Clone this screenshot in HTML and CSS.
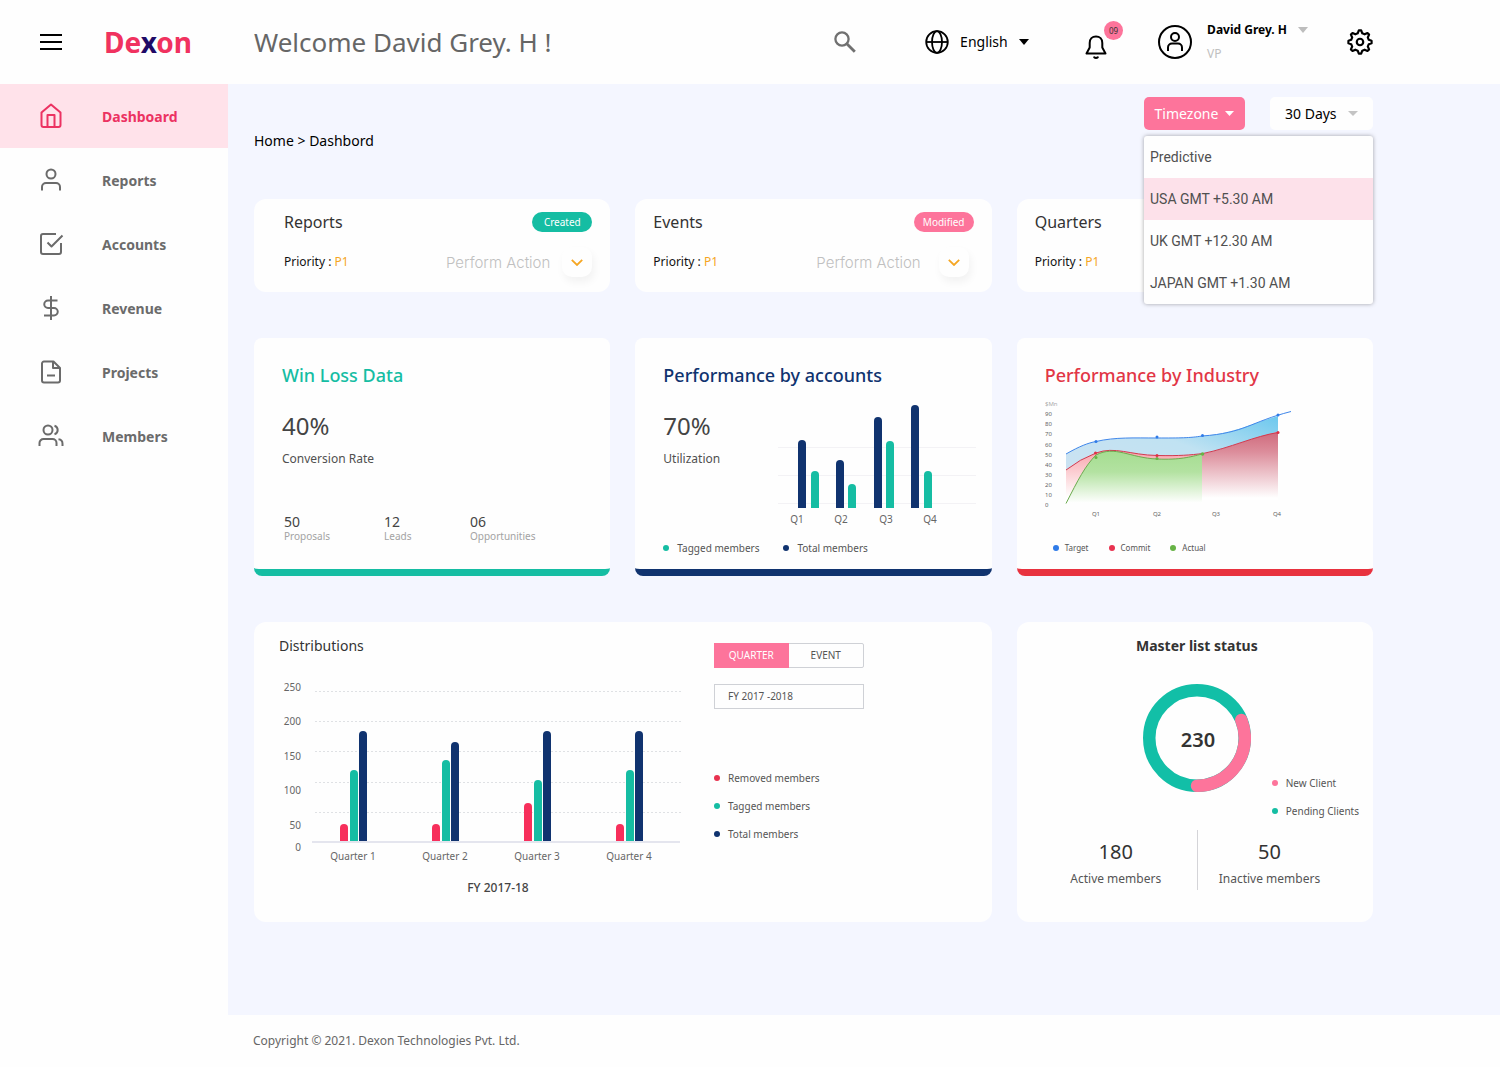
FILE: index.html
```html
<!DOCTYPE html>
<html lang="en">
<head>
<meta charset="utf-8">
<meta name="viewport" content="width=device-width, initial-scale=1">
<title>Dexon Dashboard</title>
<link rel="stylesheet" href="styles.css">
</head>
<body>
<header class="topbar">
  <div class="brand">
    <button class="icon-btn" type="button" aria-label="Menu"><svg width="22" height="18" viewBox="0 0 22 18" fill="none" stroke="#000" stroke-width="2"><path d="M0 2h22M0 9h22M0 16h22"/></svg></button>
    <a class="logo" href="#">De<span class="logo-x">x</span>on</a>
  </div>
  <h1 class="welcome">Welcome David Grey. H !</h1>
  <div class="tools">
    <button class="icon-btn search" type="button" aria-label="Search"><svg width="22" height="22" viewBox="0 0 22 22" fill="none" stroke="#707070" stroke-width="2.3"><circle cx="8" cy="8" r="6.6"/><path d="M12.8 12.8l8 8" stroke-width="2.8"/></svg></button>
    <label class="language">
      <svg width="24" height="24" viewBox="0 0 24 24" fill="none" stroke="#000" stroke-width="1.8"><circle cx="12" cy="12" r="10.8"/><ellipse cx="12" cy="12" rx="5" ry="10.8"/><path d="M1.2 12h21.6"/></svg>
      <select class="plain-select" aria-label="Language"><option>English</option></select>
      <svg width="10" height="6" viewBox="0 0 10 6"><path d="M0 0h10L5 6z"/></svg>
    </label>
    <button class="icon-btn bell" type="button" aria-label="Notifications"><svg width="22" height="24" viewBox="0 0 22 24" fill="none" stroke="#000" stroke-width="2" stroke-linejoin="round" stroke-linecap="round"><path d="M11 1.500c-3.800 0-6.300 2.700-6.300 6.400v4.600L1.500 18.500h19l-3.200-6V7.900c0-3.700-2.500-6.400-6.300-6.400z"/><path d="M9.200 22.200c.9.900 2.700.9 3.600 0"/></svg><span class="count">09</span></button>
    <div class="profile">
      <svg width="34" height="34" viewBox="0 0 34 34" fill="none" stroke="#000" stroke-width="2"><circle cx="17" cy="17" r="16"/><circle cx="17" cy="12" r="4"/><path d="M10 26v-3.500a4 4 0 0 1 4-4h6a4 4 0 0 1 4 4V26"/></svg>
      <div><div class="profile-name">David Grey. H</div><div class="profile-role">VP</div></div>
      <svg class="profile-caret" width="10" height="6" viewBox="0 0 10 6" fill="#bdbdbd"><path d="M0 0h10L5 6z"/></svg>
    </div>
    <button class="icon-btn" type="button" aria-label="Settings"><svg width="26" height="26" viewBox="0 0 24 24" fill="none" stroke="#000" stroke-width="2" stroke-linejoin="round"><circle cx="12" cy="12" r="3"/><path d="M9.900 4l1-2.700h2.200l1 2.700 2.200.9 2.600-1.200 1.500 1.500-1.200 2.600.9 2.200 2.600.9v2.200l-2.600.9-.9 2.200 1.200 2.600-1.500 1.500-2.600-1.200-2.200.9-1 2.700h-2.200l-1-2.700-2.200-.9-2.600 1.200-1.500-1.500 1.200-2.600-.9-2.200-2.600-.9v-2.200l2.600-.9.9-2.200-1.200-2.600 1.500-1.500 2.600 1.200z"/></svg></button>
  </div>
</header>
<div class="shell">
  <nav class="sidebar">
    <a class="nav-item active" href="#"><svg width="26" height="26" viewBox="0 0 26 26"><path d="M3.500 9.500L13 1.500l9.500 8V22a2 2 0 0 1-2 2h-15a2 2 0 0 1-2-2z"/><path d="M9.500 24V12h7v12"/></svg>Dashboard</a>
    <a class="nav-item" href="#"><svg width="26" height="26" viewBox="0 0 26 26"><circle cx="13" cy="7" r="4.500"/><path d="M4 23.500V20a4 4 0 0 1 4-4h10a4 4 0 0 1 4 4v3.500"/></svg>Reports</a>
    <a class="nav-item" href="#"><svg width="26" height="26" viewBox="0 0 26 26"><path d="M18 3H5a2 2 0 0 0-2 2v16a2 2 0 0 0 2 2h16a2 2 0 0 0 2-2v-9"/><path d="M9.500 11.500l4 4L24.500 4.500"/></svg>Accounts</a>
    <a class="nav-item" href="#"><svg width="26" height="26" viewBox="0 0 26 26"><path d="M13 1v24M19.500 5.500H10a3.750 3.750 0 0 0 0 7.500h6a3.750 3.750 0 0 1 0 7.500H6"/></svg>Revenue</a>
    <a class="nav-item" href="#"><svg width="26" height="26" viewBox="0 0 26 26"><path d="M15.500 2.500H6a2 2 0 0 0-2 2v17a2 2 0 0 0 2 2h14a2 2 0 0 0 2-2V9z"/><path d="M15 2.500V9h7M9 16.500h8"/></svg>Projects</a>
    <a class="nav-item" href="#"><svg width="26" height="26" viewBox="0 0 26 26"><circle cx="10" cy="7" r="4.500"/><path d="M1.500 23v-3a4 4 0 0 1 4-4h9a4 4 0 0 1 4 4v3M16.500 2.700a4.500 4.500 0 0 1 0 8.600M20.500 16.200a4.500 4.500 0 0 1 4 4.500V23"/></svg>Members</a>
  </nav>
  <div class="content">
    <main class="main">
      <div class="page-head">
        <div class="crumbs"><a href="#">Home</a> &gt; Dashbord</div>
        <div class="filters">
          <button class="timezone" type="button" aria-expanded="true">Timezone <svg width="9" height="5" viewBox="0 0 9 5" fill="#fff"><path d="M0 0h9L4.500 5z"/></svg></button>
          <label class="days"><select class="plain-select" aria-label="Period"><option>30 Days</option></select><svg width="10" height="5" viewBox="0 0 10 5" fill="#c4c4c4"><path d="M0 0h10L5 5z"/></svg></label>
          <ul class="menu">
            <li><button type="button">Predictive</button></li>
            <li><button class="chosen" type="button">USA GMT +5.30 AM</button></li>
            <li><button type="button">UK GMT +12.30 AM</button></li>
            <li><button type="button">JAPAN GMT +1.30 AM</button></li>
          </ul>
        </div>
      </div>

      <div class="grid">
        <section class="card summary wide-start">
          <div class="summary-row"><h2>Reports</h2><span class="tag created">Created</span></div>
          <div class="summary-row"><p class="priority">Priority : <span>P1</span></p><div class="action">Perform Action<button type="button" aria-label="Report actions"><svg width="12" height="7" viewBox="0 0 12 7" fill="none" stroke="#f5a623" stroke-width="1.800"><path d="M.8.800L6 6 11.200.800"/></svg></button></div></div>
        </section>
        <section class="card summary">
          <div class="summary-row"><h2>Events</h2><span class="tag modified">Modified</span></div>
          <div class="summary-row"><p class="priority">Priority : <span>P1</span></p><div class="action roomy">Perform Action<button type="button" aria-label="Event actions"><svg width="12" height="7" viewBox="0 0 12 7" fill="none" stroke="#f5a623" stroke-width="1.800"><path d="M.8.800L6 6 11.200.800"/></svg></button></div></div>
        </section>
        <section class="card summary">
          <div class="summary-row"><h2>Quarters</h2></div>
          <div class="summary-row"><p class="priority">Priority : <span>P1</span></p></div>
        </section>

        <section class="card metric teal">
          <h2>Win Loss Data</h2>
          <div class="figure">40%</div>
          <div class="figure-label">Conversion Rate</div>
          <dl class="stats">
            <div><dd>50</dd><dt>Proposals</dt></div>
            <div><dd>12</dd><dt>Leads</dt></div>
            <div><dd>06</dd><dt>Opportunities</dt></div>
          </dl>
        </section>

        <section class="card metric navy">
          <h2>Performance by accounts</h2>
          <div class="metric-body">
            <div>
              <div class="figure">70%</div>
              <div class="figure-label">Utilization</div>
            </div>
            <svg class="chart" width="198" height="128" viewBox="778 400 198 128">
              <path d="M778 447.500h198M778 475.500h198M778 503.500h198" stroke="#f3f2f5"/>
              <g fill="#10336f">
                <path d="M798 508v-64a4 4 0 0 1 8 0v64z"/><path d="M836 508v-44a4 4 0 0 1 8 0v44z"/><path d="M874 508v-87a4 4 0 0 1 8 0v87z"/><path d="M911 508v-99a4 4 0 0 1 8 0v99z"/>
              </g>
              <g fill="#15bda3">
                <path d="M811 508v-33a4 4 0 0 1 8 0v33z"/><path d="M848 508v-20a4 4 0 0 1 8 0v20z"/><path d="M886 508v-63a4 4 0 0 1 8 0v63z"/><path d="M924 508v-33a4 4 0 0 1 8 0v33z"/>
              </g>
              <g class="axis mid"><text x="797" y="523">Q1</text><text x="841" y="523">Q2</text><text x="886" y="523">Q3</text><text x="930" y="523">Q4</text></g>
            </svg>
          </div>
          <ul class="legend row"><li class="teal-dot">Tagged members</li><li class="navy-dot">Total members</li></ul>
        </section>

        <section class="card metric red">
          <h2>Performance by Industry</h2>
          <svg class="chart" width="250" height="128" viewBox="1045 400 250 128">
            <defs>
              <linearGradient id="target" x1="0" x2="1" y1="1" y2="0"><stop offset="0" stop-color="#cfe2f2"/><stop offset=".6" stop-color="#c0e2f2"/><stop offset="1" stop-color="#6cc8ee"/></linearGradient>
              <linearGradient id="commit" x1="0" x2="0" y1="0" y2="1"><stop offset="0" stop-color="#cf6a7c"/><stop offset=".3" stop-color="#dc8d9b"/><stop offset="1" stop-color="#fff"/></linearGradient>
              <linearGradient id="early" x1="0" x2="0" y1="0" y2="1"><stop offset="0" stop-color="#f8a3ab"/><stop offset="1" stop-color="#fff"/></linearGradient>
              <linearGradient id="actual" x1="0" x2="0" y1="0" y2="1"><stop offset="0" stop-color="#a5dd91"/><stop offset=".4" stop-color="#b3e2a1"/><stop offset="1" stop-color="#fff"/></linearGradient>
            </defs>
            <path fill="url(#target)" d="M1066 454C1080 446 1088 443 1096 441.500C1115 437 1135 438 1157 438C1180 438 1190 438 1202 436C1235 433 1250 424 1278 416V497H1066z"/>
            <path fill="#fff" d="M1066 470Q1080 459 1096 453C1115 446 1130 455 1157 455.500C1180 456 1190 455 1203 453.500C1230 448 1255 436 1278 432V500H1066z"/>
            <path fill="url(#early)" d="M1066 470Q1080 459 1096 453C1115 446 1130 455 1157 455.500C1180 456 1190 455 1203 453.500V497H1066z"/>
            <path fill="url(#commit)" d="M1202 454C1230 448 1255 436 1278 432V498H1202z"/>
            <path fill="url(#actual)" d="M1066 503C1078 480 1085 466 1096 455C1115 445 1130 458 1157 459C1180 460 1190 457 1202 454V503z"/>
            <g fill="none" stroke-width="1">
              <path stroke="#3f86ea" d="M1066 454C1080 446 1088 443 1096 441.500C1115 437 1135 438 1157 438C1180 438 1190 438 1202 436C1245 433 1250 422 1291 411.500"/>
              <path stroke="#cf3a50" d="M1066 470Q1080 459 1096 453C1115 446 1130 455 1157 455.500C1180 456 1190 455 1203 453.500C1230 448 1255 436 1278 432.500"/>
              <path stroke="#6cab4f" d="M1066 503.500C1078 480 1085 466 1096 455C1115 445 1130 458 1157 459C1180 460 1190 457 1202 454"/>
            </g>
            <g fill="#2f7be8"><circle cx="1096" cy="441.500" r="1.500"/><circle cx="1157" cy="437" r="1.500"/><circle cx="1202.500" cy="435.500" r="1.500"/><circle cx="1278" cy="415" r="1.500"/></g>
            <g fill="#dd3045"><circle cx="1095.500" cy="453" r="1.500"/><circle cx="1157" cy="455.500" r="1.500"/><circle cx="1278" cy="432.500" r="1.500"/></g>
            <g fill="#67b346"><circle cx="1096" cy="457.500" r="1.500"/><circle cx="1157" cy="458.500" r="1.500"/><circle cx="1202.500" cy="454" r="1.800"/></g>
            <g class="axis tiny"><text class="unit" x="1045" y="406">$Mn</text><text x="1045" y="416">90</text><text x="1045" y="426">80</text><text x="1045" y="436">70</text><text x="1045" y="447">60</text><text x="1045" y="457">50</text><text x="1045" y="467">40</text><text x="1045" y="477">30</text><text x="1045" y="487">20</text><text x="1045" y="497">10</text><text x="1045" y="507">0</text></g>
            <g class="axis tiny mid"><text x="1096" y="516">Q1</text><text x="1157" y="516">Q2</text><text x="1216" y="516">Q3</text><text x="1277" y="516">Q4</text></g>
          </svg>
          <ul class="legend row small"><li class="blue-dot">Target</li><li class="red-dot">Commit</li><li class="green-dot">Actual</li></ul>
        </section>

        <section class="card distributions">
          <div>
            <h2>Distributions</h2>
            <svg class="chart dist-chart" width="406" height="186" viewBox="279 680 406 186">
              <path d="M315 691.500h366M315 721.500h366M315 751.500h366M315 782.500h366M315 812.500h366" stroke="#dfe1e4" stroke-dasharray="2 2"/>
              <path d="M312 842h368" stroke="#e4e5ee" stroke-width="2"/>
              <g fill="#f72f5b">
                <path d="M340 841v-13a4 4 0 0 1 8 0v13z"/><path d="M432 841v-13a4 4 0 0 1 8 0v13z"/><path d="M524 841v-34a4 4 0 0 1 8 0v34z"/><path d="M616 841v-13a4 4 0 0 1 8 0v13z"/>
              </g>
              <g fill="#15bda3">
                <path d="M350 841v-67a4 4 0 0 1 8 0v67z"/><path d="M442 841v-77a4 4 0 0 1 8 0v77z"/><path d="M534 841v-57a4 4 0 0 1 8 0v57z"/><path d="M626 841v-67a4 4 0 0 1 8 0v67z"/>
              </g>
              <g fill="#10336f">
                <path d="M359 841v-106a4 4 0 0 1 8 0v106z"/><path d="M451 841v-95a4 4 0 0 1 8 0v95z"/><path d="M543 841v-106a4 4 0 0 1 8 0v106z"/><path d="M635 841v-106a4 4 0 0 1 8 0v106z"/>
              </g>
              <g class="axis end"><text x="301" y="691">250</text><text x="301" y="725">200</text><text x="301" y="760">150</text><text x="301" y="794">100</text><text x="301" y="829">50</text><text x="301" y="851">0</text></g>
              <g class="axis mid"><text x="353" y="860">Quarter 1</text><text x="445" y="860">Quarter 2</text><text x="537" y="860">Quarter 3</text><text x="629" y="860">Quarter 4</text></g>
            </svg>
            <p class="period">FY 2017-18</p>
          </div>
          <div class="dist-side">
            <div class="segment"><button class="on" type="button">QUARTER</button><button type="button">EVENT</button></div>
            <input class="year" type="text" value="FY 2017 -2018" aria-label="Financial year">
            <ul class="legend stack"><li class="red-dot">Removed members</li><li class="teal-dot">Tagged members</li><li class="navy-dot">Total members</li></ul>
          </div>
        </section>

        <section class="card master">
          <h2>Master list status</h2>
          <div class="donut-row">
            <svg class="donut" width="108" height="108" viewBox="0 0 108 108" fill="none" stroke-width="12.500"><circle cx="54" cy="54" r="47.750" stroke="#12bfa7"/><path d="M98.300 36A47.750 47.750 0 0 1 54 101.750" stroke="#fd749b" stroke-linecap="round"/><text x="55" y="63">230</text></svg>
            <ul class="legend stack"><li class="pink-dot">New Client</li><li class="teal-dot">Pending Clients</li></ul>
          </div>
          <dl class="totals">
            <div><dd>180</dd><dt>Active members</dt></div>
            <div><dd>50</dd><dt>Inactive members</dt></div>
          </dl>
        </section>
      </div>
    </main>
    <footer class="footer">Copyright © 2021. Dexon Technologies Pvt. Ltd.</footer>
  </div>
</div>
</body>
</html>
```
FILE: styles.css
```css
* { box-sizing: border-box; }
body {
  margin: 0;
  background: #fefefe;
  color: #333;
  font-family: "Noto Sans", "Open Sans", sans-serif;
  font-size: 14px;
}
h1, h2, p, ul, dl, dd { margin: 0; padding: 0; }
ul { list-style: none; }
a { color: inherit; text-decoration: none; }
button, select, input { font: inherit; color: inherit; }
svg { display: block; flex: none; }

.topbar {
  display: flex;
  align-items: center;
  height: 84px;
  padding-right: 127px;
}
.brand {
  display: flex;
  align-items: center;
  gap: 42px;
  width: 254px;
  padding-left: 40px;
  flex: none;
}
.icon-btn { padding: 0; border: 0; background: none; cursor: pointer; }
.logo { color: #f0325f; font-size: 28px; font-weight: 700; line-height: 36px; }
.logo-x { color: #1f0a66; }
.welcome { color: #666; font-size: 26px; font-weight: 400; line-height: 36px; white-space: nowrap; }
.tools { display: flex; align-items: center; margin-left: auto; }
.search { margin-right: 69px; }
.language { display: flex; align-items: center; gap: 11px; margin-right: 56px; color: #000; }
.plain-select {
  appearance: none;
  padding: 0;
  border: 0;
  background: none;
  line-height: 20px;
  color: #000;
}
.bell { position: relative; margin: 10px 51px 0 0; }
.count {
  position: absolute;
  top: -14px;
  right: -16px;
  width: 19px;
  border-radius: 10px;
  background: #fd749b;
  color: #333;
  font-size: 8px;
  line-height: 19px;
}
.profile { display: flex; align-items: center; gap: 15px; margin-right: 39px; }
.profile-name { color: #000; font-size: 12px; font-weight: 700; line-height: 24px; }
.profile-role { color: #c0c0c0; font-size: 12px; line-height: 24px; }
.profile-caret { align-self: flex-start; margin: 9px 0 0 -4px; }

.shell { display: flex; }
.sidebar { flex: 0 0 228px; }
.nav-item {
  display: flex;
  align-items: center;
  gap: 38px;
  height: 64px;
  padding-left: 38px;
  color: #6b6b6b;
  font-weight: 700;
}
.nav-item svg {
  fill: none;
  stroke: currentColor;
  stroke-width: 2;
  stroke-linejoin: round;
}
.nav-item.active { background: #ffe2ea; color: #ec3262; }
.content { flex: 1; min-width: 0; }
.main { padding: 13px 127px 93px 26px; background: #f4f6ff; }
.footer { padding: 16px 25px; color: #666; font-size: 12px; line-height: 20px; }

.page-head { display: flex; justify-content: space-between; margin-bottom: 48px; }
.crumbs { margin-top: 34px; color: #000; line-height: 20px; }
.filters { position: relative; display: flex; align-items: flex-start; gap: 25px; }
.timezone {
  display: flex;
  align-items: center;
  justify-content: center;
  gap: 7px;
  width: 101px;
  height: 33px;
  padding: 0;
  border: 0;
  border-radius: 5px;
  background: #fd749b;
  color: #fff;
}
.days {
  display: flex;
  align-items: center;
  justify-content: space-between;
  width: 103px;
  height: 33px;
  padding: 0 15px;
  border-radius: 5px;
  background: #fefefe;
}
.menu {
  position: absolute;
  top: 39px;
  right: 0;
  width: 229px;
  border-radius: 3px;
  background: #fefefe;
  box-shadow: 0 0 4px rgba(0, 0, 0, .35);
  overflow: hidden;
}
.menu button {
  display: block;
  width: 100%;
  height: 42px;
  padding: 0 6px;
  border: 0;
  background: none;
  color: #505050;
  font-family: Roboto, sans-serif;
  text-align: left;
}
.menu .chosen { background: #fde1ea; }

.grid { display: grid; grid-template-columns: repeat(3, minmax(0, 1fr)); gap: 46px 25px; }
.card { border-radius: 12px; background: #fefefe; }

.summary { padding: 11px 18px 10px; }
.wide-start { padding-left: 30px; }
.summary-row { display: flex; align-items: center; justify-content: space-between; }
.summary-row + .summary-row { height: 40px; margin-top: 8px; }
.summary h2 { font-size: 16px; font-weight: 400; line-height: 24px; }
.tag {
  width: 60px;
  border-radius: 10px;
  color: #fff;
  font-size: 10px;
  line-height: 20px;
  text-align: center;
}
.created { background: #15bda3; }
.modified { background: #fd749b; }
.priority { color: #111; font-size: 12px; line-height: 18px; }
.priority span { color: #f5a623; }
.action {
  display: flex;
  align-items: center;
  gap: 12px;
  color: #c0c0c0;
  font-family: Inter, sans-serif;
  font-size: 15px;
  font-weight: 300;
}
.roomy { gap: 18px; padding-right: 5px; }
.action button {
  display: grid;
  place-items: center;
  width: 30px;
  height: 30px;
  padding: 0;
  border: 0;
  border-radius: 10px;
  background: #fefefe;
  box-shadow: 2px 5px 8px rgba(0, 0, 0, .05);
}

.metric {
  display: flex;
  flex-direction: column;
  min-height: 238px;
  padding: 24px 28px 13px;
  border-bottom: 7px solid;
  border-radius: 8px;
}
.metric h2 { font-size: 18px; font-weight: 500; line-height: 26px; }
.teal { border-color: #15bda3; }
.teal h2 { color: #15bda3; }
.navy { border-color: #10336f; }
.navy h2 { color: #10336f; }
.red { border-color: #e8323f; }
.red h2 { color: #e23646; }
.figure { margin-top: 22px; color: #444; font-size: 24px; line-height: 32px; }
.figure-label { margin-top: 8px; color: #505050; font-size: 12px; line-height: 18px; }
.stats {
  display: grid;
  grid-template-columns: 100px 86px 1fr;
  margin-top: 46px;
  padding-left: 2px;
}
.stats dd { color: #444; font-size: 14px; line-height: 16px; }
.stats dt { color: #a3a3a3; font-size: 10px; line-height: 12px; }
.metric-body { display: grid; grid-template-columns: 115px 1fr; }
.chart { margin-top: 12px; }
.axis { fill: #666; font-size: 10px; }
.tiny { font-size: 6px; }
.mid { text-anchor: middle; }
.end { text-anchor: end; }
.unit { fill: #aaa; }

.legend { color: #555; font-size: 10px; line-height: 16px; }
.legend li { display: flex; align-items: center; gap: 8px; white-space: nowrap; }
.legend li::before { content: ""; width: 6px; height: 6px; border-radius: 50%; background: #15bda3; }
.row { display: flex; gap: 24px; margin-top: 12px; }
.metric { padding-bottom: 11px; }
.small { gap: 20px; padding: 0 0 0 8px; font-size: 8px; }
.small li { gap: 6px; }
.stack { display: grid; gap: 12px; }
.legend .navy-dot::before { background: #10336f; }
.legend .blue-dot::before { background: #2f7be8; }
.legend .red-dot::before { background: #e8324f; }
.legend .green-dot::before { background: #67b346; }
.legend .pink-dot::before { background: #fd749b; }

.distributions {
  display: grid;
  grid-template-columns: 435px 1fr;
  grid-column: span 2;
  padding: 12px 25px 24px;
}
.distributions h2 { font-size: 14px; font-weight: 400; line-height: 24px; }
.dist-chart { margin-top: 22px; }
.period { width: 438px; margin-top: 12px; color: #444; font-size: 12px; font-weight: 500; line-height: 20px; text-align: center; }
.dist-side { padding-top: 9px; color: #555; font-size: 10px; }
.segment { display: flex; width: 150px; height: 25px; border: 1px solid #cfd1d6; border-radius: 2px; }
.segment button { flex: 1; padding: 0 0 2px; border: 0; background: none; }
.segment .on { margin: -1px 0 -1px -1px; background: #fd749b; color: #fff; }
.year { display: block; width: 150px; height: 25px; margin: 16px 0 61px; padding: 0 13px 2px; border: 1px solid #cfd1d6; background: none; }

.master { padding: 12px 14px 32px 18px; }
.master h2 { font-size: 14px; font-weight: 700; line-height: 24px; text-align: center; }
.donut-row { display: grid; grid-template-columns: 1fr 108px 1fr; margin-top: 26px; }
.donut { grid-column: 2; }
.donut text { fill: #333; stroke: none; font-size: 20px; font-weight: 600; text-anchor: middle; }
.donut-row .legend { justify-self: end; padding-top: 91px; }
.totals { display: grid; grid-template-columns: 1fr 1fr; margin-top: 11px; text-align: center; }
.totals div { padding: 10px 0 2px; }
.totals div + div { padding-right: 18px; border-left: 1px solid #d4d4d8; }
.totals dd { color: #333; font-size: 20px; line-height: 24px; }
.totals dt { margin-top: 6px; color: #555; font-size: 12px; line-height: 18px; }
```
